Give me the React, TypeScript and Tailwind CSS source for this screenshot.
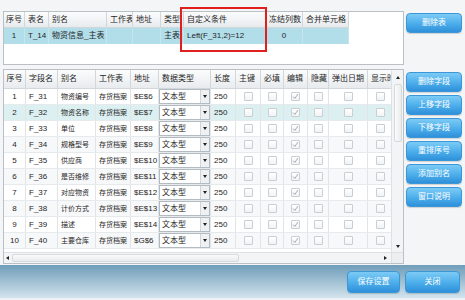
import React from "react";

const topCols = [
  { label: "序号", w: "w-[21px]", center: true },
  { label: "表名", w: "w-[24px]" },
  { label: "别名", w: "w-[58px]" },
  { label: "工作表", w: "w-[26px]" },
  { label: "地址", w: "w-[28px]" },
  { label: "类型", w: "w-[23px]" },
  { label: "自定义条件", w: "w-[82px]" },
  { label: "冻结列数", w: "w-[37px]" },
  { label: "合并单元格", w: "w-[46px]" },
];

const topRow = ["1", "T_14", "物资信息_主表", "", "", "主表", "Left(F_31,2)=12", "0", ""];

const cols = [
  { label: "序号", w: "w-[22px]", center: true },
  { label: "字段名", w: "w-[32px]" },
  { label: "别名", w: "w-[38px]" },
  { label: "工作表", w: "w-[35px]" },
  { label: "地址", w: "w-[28px]" },
  { label: "数据类型", w: "w-[52px]" },
  { label: "长度", w: "w-[25px]" },
  { label: "主键", w: "w-[25px]" },
  { label: "必填", w: "w-[23px]" },
  { label: "编辑", w: "w-[24px]" },
  { label: "隐藏", w: "w-[21px]" },
  { label: "弹出日期", w: "w-[39px]" },
  { label: "显示时间", w: "w-[25px]" },
];

const rows = [
  ["1", "F_31", "物资编号", "存货档案", "$E$6"],
  ["2", "F_32", "物资名称", "存货档案", "$E$7"],
  ["3", "F_33", "单位", "存货档案", "$E$8"],
  ["4", "F_34", "规格型号", "存货档案", "$E$9"],
  ["5", "F_35", "供应商", "存货档案", "$E$10"],
  ["6", "F_36", "是否维修", "存货档案", "$E$11"],
  ["7", "F_37", "对应物资", "存货档案", "$E$12"],
  ["8", "F_38", "计价方式", "存货档案", "$E$13"],
  ["9", "F_39", "描述", "存货档案", "$E$14"],
  ["10", "F_40", "主要仓库", "存货档案", "$G$6"],
];

const sideButtons = ["删除字段", "上移字段", "下移字段", "重排序号", "添加别名", "窗口说明"];

function BlueButton({ label, className }: { label: string; className: string }) {
  return (
    <div
      className={`flex items-center justify-center rounded-[4px] border border-[#3b97d8] bg-linear-to-b from-[#7ccbf5] via-[#4fb0ec] to-[#2e90da] text-[8px] text-white shadow-[0_1px_1px_rgba(0,0,0,0.15)] ${className}`}
    >
      {label}
    </div>
  );
}

function Check({ on }: { on?: boolean }) {
  return (
    <span className="relative flex h-[9px] w-[9px] items-center justify-center rounded-[1px] border border-[#c9ced3] bg-linear-to-b from-white to-[#f1f3f5]">
      {on && (
        <svg width="7" height="7" viewBox="0 0 7 7" className="absolute">
          <path d="M1 3.6 L2.8 5.4 L6 1" fill="none" stroke="#9a9fa4" strokeWidth="0.9" />
        </svg>
      )}
    </span>
  );
}

function Combo() {
  return (
    <div className="flex h-[15px] w-full items-center border border-[#b3bbc2] bg-white">
      <span className="flex-1 pl-[2px]">文本型</span>
      <span className="flex h-full w-[9px] items-center justify-center border-l border-[#cfd5da] bg-[#eef0f2]">
        <span className="h-0 w-0 border-x-[2px] border-t-[3px] border-x-transparent border-t-[#222]" />
      </span>
    </div>
  );
}

function TopGrid() {
  return (
    <div className="relative h-[54px] border border-[#b9c1c7] bg-white">
      <div className="flex h-[16px]">
        {topCols.map((c) => (
          <div
            key={c.label}
            className={`${c.w} flex shrink-0 items-center overflow-hidden whitespace-nowrap border-r border-b border-[#d2d7db] bg-linear-to-b from-[#fbfcfc] to-[#e8ebee] ${c.center ? "justify-center" : "pl-[3px]"}`}
          >
            {c.label}
          </div>
        ))}
      </div>
      <div className="flex h-[16px]">
        {topCols.map((c, i) => (
          <div
            key={c.label}
            className={`${c.w} flex shrink-0 items-center overflow-hidden whitespace-nowrap border-r border-[#c6e4ec] bg-[#b2deea] ${c.center || i === 7 ? "justify-center" : "pl-[3px]"}`}
          >
            {topRow[i]}
          </div>
        ))}
      </div>
      {/* red annotation box */}
      <div className="absolute left-[176px] top-[-5px] h-[45px] w-[87px] border-2 border-[#e1201d]" />
    </div>
  );
}

function BottomGrid() {
  return (
    <div className="flex h-[195px] flex-col border border-[#b9c1c7] bg-white">
      <div className="flex flex-1">
        <div className="flex-1 overflow-hidden">
          <div className="flex h-[19px]">
            {cols.map((c) => (
              <div
                key={c.label}
                className={`${c.w} flex shrink-0 items-center overflow-hidden whitespace-nowrap border-r border-b border-[#d2d7db] bg-linear-to-b from-[#fbfcfc] to-[#e8ebee] ${c.center ? "justify-center" : "pl-[3px]"}`}
              >
                {c.label}
              </div>
            ))}
          </div>
          {rows.map((r, ri) => (
            <div
              key={r[0]}
              className={`flex h-[16px] border-b border-[#e7eaec] ${ri === 1 ? "bg-[#dcf0f1]" : ri % 2 === 1 ? "bg-[#f7f8f9]" : "bg-white"}`}
            >
              {cols.map((c, ci) => (
                <div
                  key={c.label}
                  className={`${c.w} flex shrink-0 items-center overflow-hidden whitespace-nowrap border-r border-[#e2e5e8] ${ci === 0 || ci >= 7 ? "justify-center" : ci === 5 ? "" : "pl-[3px]"} ${ci === 2 || ci === 3 ? "text-[7px]" : ""}`}
                >
                  {ci < 5 && r[ci]}
                  {ci === 5 && <Combo />}
                  {ci === 6 && "250"}
                  {ci >= 7 && <Check on={ci === 9} />}
                </div>
              ))}
            </div>
          ))}
        </div>
        <div className="flex w-[12px] flex-col border-l border-[#dde1e4] bg-[#f3f4f5]">
          <div className="flex h-[14px] items-center justify-center">
            <span className="h-0 w-0 border-x-[2.5px] border-b-[3px] border-x-transparent border-b-[#222]" />
          </div>
          <div className="mx-auto h-[58px] w-[8px] rounded-[2px] border border-[#d6dadd] bg-linear-to-r from-[#fbfbfb] to-[#e9ebed]" />
          <div className="flex-1" />
          <div className="flex h-[12px] items-center justify-center">
            <span className="h-0 w-0 border-x-[2.5px] border-t-[3px] border-x-transparent border-t-[#222]" />
          </div>
        </div>
      </div>
      <div className="flex h-[11px] border-t border-[#dde1e4] bg-[#f3f4f5]">
        <div className="flex flex-1 items-center">
          <span className="ml-[2px] h-0 w-0 border-y-[2.5px] border-r-[3px] border-y-transparent border-r-[#222]" />
          <div className="ml-[3px] h-[8px] w-[227px] rounded-[2px] border border-[#d6dadd] bg-linear-to-b from-[#fbfbfb] to-[#e9ebed]" />
          <div className="flex-1" />
          <span className="mr-[4px] h-0 w-0 border-y-[2.5px] border-l-[3px] border-y-transparent border-l-[#222]" />
        </div>
        <div className="w-[12px] border-l border-[#dde1e4] bg-[#eceef0]" />
      </div>
    </div>
  );
}

export default function App() {
  return (
    <div className="flex h-[300px] w-[465px] flex-col overflow-hidden bg-[#f3f5f7] font-['Liberation_Sans','Noto_Sans_CJK_SC',sans-serif] text-[8px] leading-none text-[#262626]">
      <div className="flex pl-[3px] pt-[11px]">
        <div className="flex w-[401px] flex-col gap-[4px]">
          <TopGrid />
          <BottomGrid />
        </div>
        <div className="ml-[2px] flex flex-col pt-[2px]">
          <BlueButton label="删除表" className="h-[20px] w-[56px]" />
          <div className="mt-[39px] flex flex-col gap-[3px]">
            {sideButtons.map((b) => (
              <BlueButton key={b} label={b} className="h-[20px] w-[56px]" />
            ))}
          </div>
        </div>
      </div>
      <div className="mt-[1px] flex h-[33px] items-center justify-end gap-[5px] bg-linear-to-b from-[#6f9db9] to-[#d3e4ed] pr-[5px]">
        <BlueButton label="保存设置" className="h-[22px] w-[53px]" />
        <BlueButton label="关闭" className="h-[22px] w-[55px]" />
      </div>
      <div className="flex-1 bg-[#eef2f5]" />
    </div>
  );
}
